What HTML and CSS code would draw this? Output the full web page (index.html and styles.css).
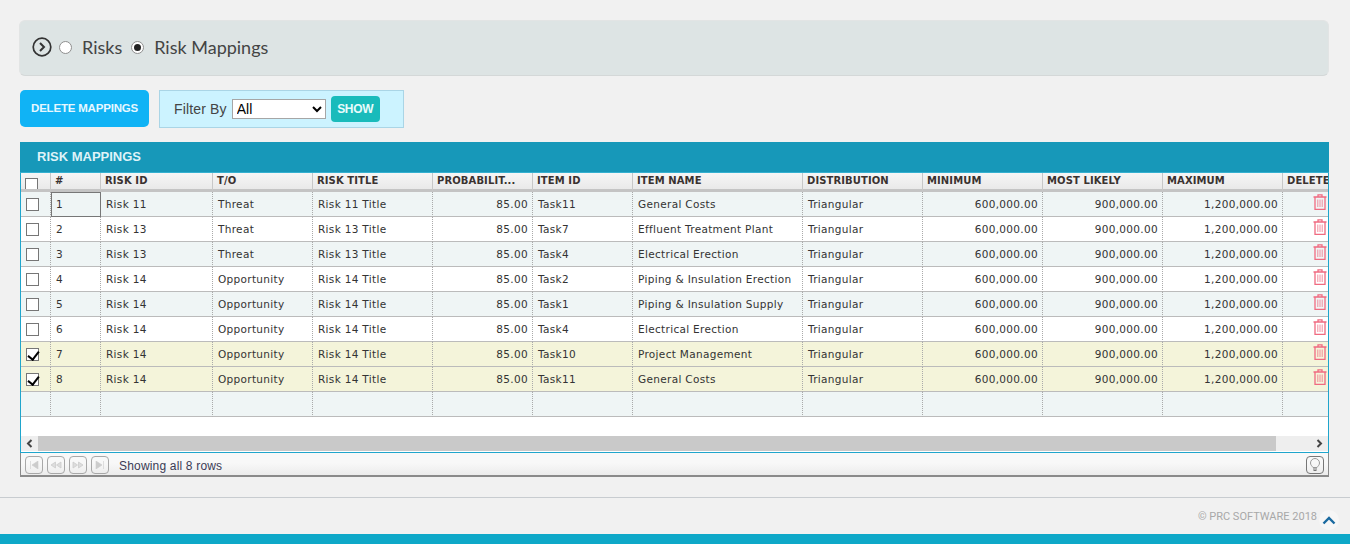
FILE: index.html
```html
<!DOCTYPE html>
<html lang="en">
<head>
<meta charset="utf-8">
<title>Risk Mappings</title>
<link rel="stylesheet" href="styles.css">
</head>
<body>
<svg class="defs" width="0" height="0" aria-hidden="true">
  <symbol id="trash" viewBox="0 0 14 16">
    <path d="M5 2.500V.8h4v1.700M.5 3h13M2 3v12.300h10V3" fill="none" stroke="currentColor" stroke-width="1.300"/>
    <path d="M4.800 5.500v7.500M7 5.500v7.500M9.200 5.500v7.500" fill="none" stroke="currentColor" stroke-width="1" opacity=".75"/>
  </symbol>
</svg>
<main class="page">
  <section class="selector">
    <svg class="circle-arrow" width="20" height="20" viewBox="0 0 20 20"><circle cx="10" cy="10" r="8.800" fill="none" stroke="#333" stroke-width="1.700"/><path d="M8 6l4 4-4 4" fill="none" stroke="#333" stroke-width="2"/></svg>
    <span class="radio"></span><span class="radio-label">Risks</span>
    <span class="radio radio-on"></span><span class="radio-label">Risk Mappings</span>
  </section>
  <section class="toolbar">
    <button class="btn-delete">DELETE MAPPINGS</button>
    <div class="filter">
      <label class="filter-label">Filter By</label>
      <select class="filter-select"><option>All</option></select>
      <button class="btn-show">SHOW</button>
    </div>
  </section>
  <section class="grid">
    <h2 class="grid-title">RISK MAPPINGS</h2>
    <div class="grid-body">
      <table class="data">
        <colgroup>
          <col class="c-chk"><col class="c-num"><col class="c-id"><col class="c-to"><col class="c-title"><col class="c-prob"><col class="c-item"><col class="c-name"><col class="c-dist"><col class="c-val"><col class="c-val"><col class="c-val"><col class="c-del">
        </colgroup>
        <thead>
          <tr><th class="th-chk"><span class="box box-head"></span></th><th>#</th><th>RISK ID</th><th>T/O</th><th>RISK TITLE</th><th>PROBABILIT...</th><th>ITEM ID</th><th>ITEM NAME</th><th>DISTRIBUTION</th><th>MINIMUM</th><th>MOST LIKELY</th><th>MAXIMUM</th><th>DELETE</th></tr>
        </thead>
        <tbody>
          <tr class="alt"><td class="chk"><span class="box"></span></td><td class="focus">1</td><td>Risk 11</td><td>Threat</td><td>Risk 11 Title</td><td class="r">85.00</td><td>Task11</td><td>General Costs</td><td>Triangular</td><td class="r">600,000.00</td><td class="r">900,000.00</td><td class="r">1,200,000.00</td><td class="del"><svg class="trash"><use href="#trash"/></svg></td></tr>
          <tr><td class="chk"><span class="box"></span></td><td>2</td><td>Risk 13</td><td>Threat</td><td>Risk 13 Title</td><td class="r">85.00</td><td>Task7</td><td>Effluent Treatment Plant</td><td>Triangular</td><td class="r">600,000.00</td><td class="r">900,000.00</td><td class="r">1,200,000.00</td><td class="del"><svg class="trash"><use href="#trash"/></svg></td></tr>
          <tr class="alt"><td class="chk"><span class="box"></span></td><td>3</td><td>Risk 13</td><td>Threat</td><td>Risk 13 Title</td><td class="r">85.00</td><td>Task4</td><td>Electrical Erection</td><td>Triangular</td><td class="r">600,000.00</td><td class="r">900,000.00</td><td class="r">1,200,000.00</td><td class="del"><svg class="trash"><use href="#trash"/></svg></td></tr>
          <tr><td class="chk"><span class="box"></span></td><td>4</td><td>Risk 14</td><td>Opportunity</td><td>Risk 14 Title</td><td class="r">85.00</td><td>Task2</td><td>Piping &amp; Insulation Erection</td><td>Triangular</td><td class="r">600,000.00</td><td class="r">900,000.00</td><td class="r">1,200,000.00</td><td class="del"><svg class="trash"><use href="#trash"/></svg></td></tr>
          <tr class="alt"><td class="chk"><span class="box"></span></td><td>5</td><td>Risk 14</td><td>Opportunity</td><td>Risk 14 Title</td><td class="r">85.00</td><td>Task1</td><td>Piping &amp; Insulation Supply</td><td>Triangular</td><td class="r">600,000.00</td><td class="r">900,000.00</td><td class="r">1,200,000.00</td><td class="del"><svg class="trash"><use href="#trash"/></svg></td></tr>
          <tr><td class="chk"><span class="box"></span></td><td>6</td><td>Risk 14</td><td>Opportunity</td><td>Risk 14 Title</td><td class="r">85.00</td><td>Task4</td><td>Electrical Erection</td><td>Triangular</td><td class="r">600,000.00</td><td class="r">900,000.00</td><td class="r">1,200,000.00</td><td class="del"><svg class="trash"><use href="#trash"/></svg></td></tr>
          <tr class="sel"><td class="chk"><span class="box box-on"></span></td><td>7</td><td>Risk 14</td><td>Opportunity</td><td>Risk 14 Title</td><td class="r">85.00</td><td>Task10</td><td>Project Management</td><td>Triangular</td><td class="r">600,000.00</td><td class="r">900,000.00</td><td class="r">1,200,000.00</td><td class="del"><svg class="trash"><use href="#trash"/></svg></td></tr>
          <tr class="sel"><td class="chk"><span class="box box-on"></span></td><td>8</td><td>Risk 14</td><td>Opportunity</td><td>Risk 14 Title</td><td class="r">85.00</td><td>Task11</td><td>General Costs</td><td>Triangular</td><td class="r">600,000.00</td><td class="r">900,000.00</td><td class="r">1,200,000.00</td><td class="del"><svg class="trash"><use href="#trash"/></svg></td></tr>
          <tr class="alt"><td></td><td></td><td></td><td></td><td></td><td></td><td></td><td></td><td></td><td></td><td></td><td></td><td></td></tr>
        </tbody>
      </table>
      <div class="spacer"></div>
      <div class="hscroll">
        <svg class="sb-arrow" width="17" height="15" viewBox="0 0 17 15"><path d="M10.500 4l-3.500 3.500 3.500 3.500" fill="none" stroke="#444" stroke-width="2"/></svg>
        <div class="sb-track"><div class="sb-thumb"></div></div>
        <svg class="sb-arrow" width="17" height="15" viewBox="0 0 17 15"><path d="M6.500 4l3.500 3.500-3.500 3.500" fill="none" stroke="#444" stroke-width="2"/></svg>
      </div>
    </div>
    <div class="pager">
      <span class="pg-btn"><svg width="10" height="8" viewBox="0 0 10 8"><path d="M1.500 0v8M9 0v8L3 4z" fill="#ccc" stroke="#ccc" stroke-width=".6"/></svg></span>
      <span class="pg-btn"><svg width="12" height="8" viewBox="0 0 12 8"><path d="M5.500 1v6L1 4zM11 1v6L6.500 4z" fill="#ddd" stroke="#ccc" stroke-width=".8"/></svg></span>
      <span class="pg-btn"><svg width="12" height="8" viewBox="0 0 12 8"><path d="M1 1v6l4.500-3zM6.500 1v6L11 4z" fill="#ddd" stroke="#ccc" stroke-width=".8"/></svg></span>
      <span class="pg-btn"><svg width="10" height="8" viewBox="0 0 10 8"><path d="M8.500 0v8M1 0v8l6-4z" fill="#ccc" stroke="#ccc" stroke-width=".6"/></svg></span>
      <span class="pg-text">Showing all 8 rows</span>
      <span class="pg-btn pg-tip"><svg width="12" height="14" viewBox="0 0 12 14"><path d="M4 9.500C3 8 1.500 7 1.500 5a4.500 4.500 0 0 1 9 0c0 2-1.500 3-2.500 4.500z" fill="none" stroke="#999"/><path d="M4 11h4M4.500 12.500h3" stroke="#777"/></svg></span>
    </div>
  </section>
</main>
<footer class="foot">
  <div class="foot-row">
    <span class="copy">© PRC SOFTWARE 2018</span>
    <span class="top-btn"><svg width="14" height="9" viewBox="0 0 14 9"><path d="M1.500 7.500L7 2l5.500 5.500" fill="none" stroke="#1a6aa0" stroke-width="2.400"/></svg></span>
  </div>
  <div class="foot-band"></div>
</footer>
</body>
</html>
```
FILE: styles.css
```css
* { box-sizing: border-box; }
html, body { margin: 0; height: 544px; overflow: hidden; }
body { background: #f1f1f1; font-family: "DejaVu Sans", Verdana, sans-serif; color: #333; display: flex; flex-direction: column; }
.defs { position: absolute; }
.page { flex: 1; padding: 20px 21px 0 19px; min-height: 0; }

.selector { height: 56px; background: #dde4e4; border: 1px solid #e2e4e4; border-bottom-color: #d4d8d8; border-radius: 6px; display: flex; align-items: center; padding: 0 0 2px 12px; font-family: "Lato", sans-serif; font-size: 18px; color: #444; }
.circle-arrow { flex: none; margin-right: 7px; }
.radio { width: 13px; height: 13px; border-radius: 50%; border: 1px solid #8f8f8f; background: #fff; flex: none; margin-right: 10px; position: relative; }
.radio-on::after { content: ""; position: absolute; left: 2px; top: 2px; width: 7px; height: 7px; border-radius: 50%; background: #222; }
.radio-label { margin-right: 9px; }

.toolbar { display: flex; align-items: flex-start; margin: 14px 0 0 1px; gap: 10px; }
.btn-delete { width: 129px; height: 37px; background: #10b3f5; color: #e6f7ff; border: 0; border-radius: 5px; font-family: "Liberation Sans", Arial, sans-serif; font-weight: 700; font-size: 11.5px; letter-spacing: -.2px; padding: 0 0 2px; }
.filter { width: 245px; height: 38px; background: #ccf3ff; border: 1px solid #aad5e6; display: flex; align-items: center; padding-left: 14px; font-family: "Liberation Sans", Arial, sans-serif; }
.filter-label { font-size: 14px; letter-spacing: .15px; color: #444; margin-right: 5px; }
.filter-select { width: 94px; height: 20px; font-family: "Liberation Sans", Arial, sans-serif; font-size: 14px; background: #fff; border: 1px solid #a6a6a6; border-radius: 0; color: #000; padding: 0; margin-right: 5px; }
.btn-show { width: 49px; height: 26px; background: #19bbbb; color: #e8fbfb; border: 0; border-radius: 4px; font-family: "Liberation Sans", Arial, sans-serif; font-weight: 700; font-size: 12px; letter-spacing: -.3px; padding: 0; }

.grid { margin: 14px 0 0 1px; width: 1309px; height: 335px; display: flex; flex-direction: column; border-bottom: 2px solid #8a8a8a; border-right: 1px solid #8a8a8a; border-left: 1px solid #8a8a8a; }
.grid-title { margin: 0 -1px; height: 31px; background: #1798b9; color: #dff3f8; font-family: "Liberation Sans", Arial, sans-serif; font-weight: 700; font-size: 13px; letter-spacing: 0; line-height: 29px; padding-left: 17px; flex: none; border-bottom: 1px solid #35b0d0; }
.grid-body { height: 280px; background: #fff; border-left: 1px solid #1fa5cc; border-right: 1px solid #1fa5cc; border-bottom: 1px solid #1fa5cc; margin: 0 -1px; overflow: hidden; flex: none; display: flex; flex-direction: column; }

.data { table-layout: fixed; width: 1377px; border-collapse: separate; border-spacing: 0; font-size: 10.5px; color: #333; flex: none; }
.c-chk { width: 30px; } .c-num { width: 50px; } .c-id { width: 112px; } .c-to { width: 100px; } .c-title { width: 120px; } .c-prob { width: 100px; } .c-item { width: 100px; } .c-name { width: 170px; } .c-dist { width: 120px; } .c-val { width: 120px; } .c-del { width: 115px; }
.data th { height: 19px; padding: 0 4px 2px; text-align: left; font-size: 10px; font-weight: 700; color: #3a3230; background: linear-gradient(#f6f6f6, #e9e9e9); border-right: 1px solid #c8c8c8; border-bottom: 3px solid #c4c4c4; white-space: nowrap; overflow: hidden; letter-spacing: .1px; }
.data td { height: 25px; padding: 0 5px 1px; background: #fff; border-right: 1px dotted #aaa; border-bottom: 1px solid #bbb; white-space: nowrap; overflow: hidden; letter-spacing: .32px; }
.data .alt td { background: #eff5f5; }
.data .sel td { background: #f4f4da; }
.data td.r { text-align: right; padding-right: 4px; }
.data td.focus { outline: 1px solid #777; outline-offset: -1px; }
.data td.chk { padding: 1px 0 0 5px; text-align: left; }
.data th.th-chk { padding: 0 0 0 4px; vertical-align: top; }
.box { display: block; width: 13px; height: 13px; background: #fff; border: 1px solid #767676; position: relative; }
.box-head { margin: 5px 0 -3px; }
.box-on::after { content: ""; position: absolute; left: 3px; top: 0; width: 5px; height: 9px; border: solid #000; border-width: 0 2.500px 2.500px 0; transform: rotate(38deg); }
.data td.del { padding: 0 0 4px 30px; color: #f06a80; }
.trash { width: 14px; height: 16px; display: block; }

.spacer { height: 19px; flex: none; }
.hscroll { height: 15px; background: #eee; display: flex; flex: none; }
.sb-arrow { flex: none; }
.sb-track { flex: 1; }
.sb-thumb { width: 1238px; height: 15px; background: #c9c9c9; }

.pager { flex: 1; display: flex; align-items: center; padding: 2px 4px 0; background: linear-gradient(#f8f8f8 0, #f8f8f8 45%, #ececec 100%); font-family: "Liberation Sans", Arial, sans-serif; font-size: 12px; color: #3b3b55; }
.pg-btn { width: 18px; height: 18px; border: 1px solid #a8a8a8; border-radius: 4px; display: flex; align-items: center; justify-content: center; margin-right: 4px; flex: none; }
.pg-text { margin: 1px 0 0 6px; flex: 1; letter-spacing: .18px; }
.pg-tip { margin-right: 0; border-color: #777; }

.foot { flex: none; height: 47px; border-top: 1px solid #c8ccd0; display: flex; flex-direction: column; }
.foot-row { flex: 1; display: flex; justify-content: flex-end; align-items: flex-start; padding: 12px 11px 0 0; }
.copy { font-family: "Roboto", "Liberation Sans", sans-serif; font-size: 11px; color: #a8a8a8; margin-right: 2px; }
.top-btn { width: 20px; height: 20px; display: flex; align-items: center; justify-content: center; background: #f6f6f6; border-radius: 50%; }
.foot-band { height: 10px; background: #0ea8c8; flex: none; }
```
